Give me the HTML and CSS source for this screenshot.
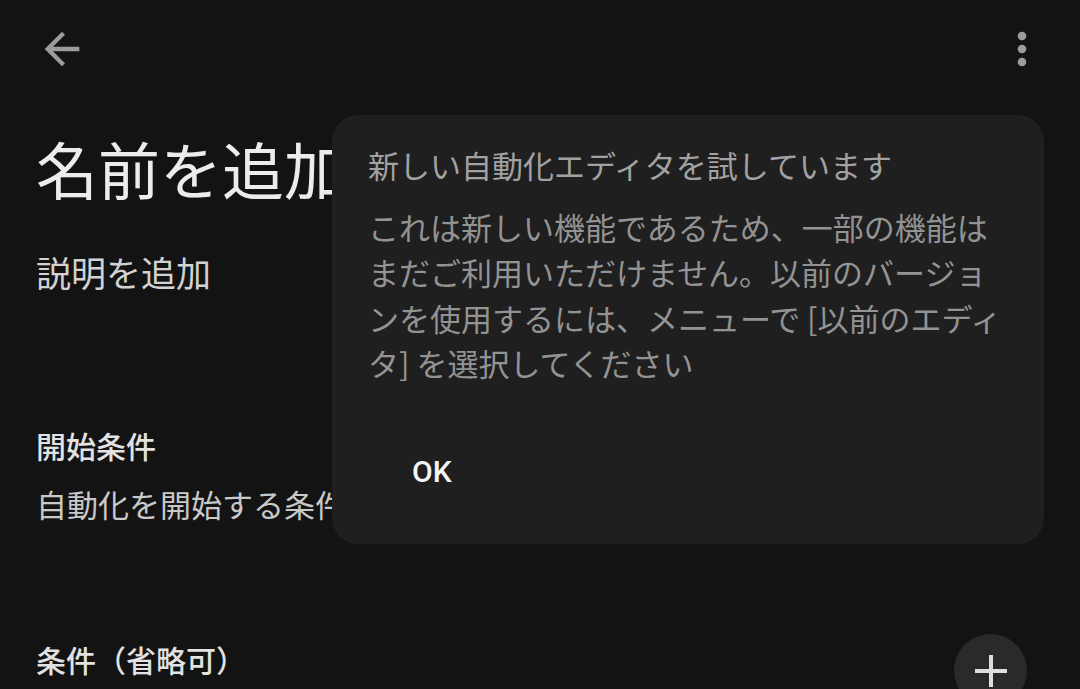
FILE: index.html
```html
<!DOCTYPE html>
<html lang="ja">
<head>
  <meta charset="UTF-8" />
  <title>オートメーションの編集</title>
  <link rel="stylesheet" href="styles.css">
</head>
<body>
  <div class="screen">
    <div class="topbar">
      <button class="icon-btn" aria-label="戻る">
        <svg viewBox="0 0 24 24" width="52" height="52"><path d="M20 11H7.83l5.59-5.59L12 4l-8 8 8 8 1.41-1.41L7.83 13H20v-2z" fill="currentColor"/></svg>
      </button>
      <button class="icon-btn" aria-label="メニュー">
        <svg viewBox="0 0 24 24" width="52" height="52"><circle cx="12" cy="6" r="2" fill="currentColor"/><circle cx="12" cy="12" r="2" fill="currentColor"/><circle cx="12" cy="18" r="2" fill="currentColor"/></svg>
      </button>
    </div>

    <div class="content">
      <h1 class="name">名前を追加</h1>
      <div class="desc">説明を追加</div>

      <div class="section-title trigger-title">開始条件</div>
      <div class="section-sub">自動化を開始する条件</div>

      <div class="section-row">
        <div class="section-title">条件（省略可）</div>
        <button class="fab" aria-label="追加">
          <svg viewBox="0 0 32 32" width="32" height="32"><path d="M14 0h4v14h14v4H18v14h-4V18H0v-4h14z" fill="currentColor"/></svg>
        </button>
      </div>
    </div>

    <div class="dialog">
      <div class="dialog-title">新しい自動化エディタを試しています</div>
      <div class="dialog-body">
        これは新しい機能であるため、一部の機能は<br>
        まだご利用いただけません。以前のバージョ<br>
        ンを使用するには、メニューで [以前のエディ<br>
        タ] を選択してください
      </div>
      <div class="dialog-actions">
        <button class="text-btn">OK</button>
      </div>
    </div>
  </div>
</body>
</html>
```

FILE: styles.css
```css
* {
  box-sizing: border-box;
}

body {
  margin: 0;
  background-color: #131313;
  font-family: "Noto Sans CJK JP", "Noto Sans", sans-serif;
  color: #e6e6e6;
  overflow: hidden;
}

button {
  background: none;
  border: none;
  padding: 0;
  color: inherit;
  font: inherit;
  cursor: pointer;
}

.screen {
  position: relative;
  width: 1080px;
  height: 689px;
  overflow: hidden;
}

.topbar {
  height: 98px;
  display: flex;
  align-items: center;
  justify-content: space-between;
  padding: 0 32px 0 36px;
}

.icon-btn {
  display: flex;
  color: #9c9c9c;
}

.content {
  padding-left: 36px;
  padding-right: 53px;
}

.name {
  margin: 39px 0 0;
  font-size: 62px;
  line-height: 62px;
  font-weight: 400;
  color: #ececec;
  white-space: nowrap;
}

.desc {
  margin-top: 55px;
  font-size: 35px;
  line-height: 35px;
  color: #d2d2d2;
}

.section-title {
  font-size: 30px;
  line-height: 30px;
  font-weight: 500;
  color: #e2e2e2;
  white-space: nowrap;
}

.trigger-title {
  margin-top: 141px;
}

.section-sub {
  margin-top: 28px;
  font-size: 31px;
  line-height: 31px;
  color: #c9c9c9;
  white-space: nowrap;
}

.section-row {
  margin-top: 125px;
  display: flex;
  align-items: flex-start;
  justify-content: space-between;
}

.fab {
  margin-top: -10px;
  width: 73px;
  height: 73px;
  border-radius: 50%;
  background: #2a2a2a;
  color: #dedede;
  display: flex;
  align-items: center;
  justify-content: center;
}

/* popup over the editor */
.dialog {
  position: absolute;
  left: 332px;
  top: 115px;
  width: 712px;
  height: 429px;
  border-radius: 26px;
  background: #1f1f1f;
  padding: 34px 40px 0 36px;
}

.dialog-title {
  font-size: 31px;
  line-height: 31px;
  color: #a2a2a2;
  white-space: nowrap;
}

.dialog-body {
  margin-top: 24px;
  font-size: 31px;
  line-height: 45.3px;
  color: #939393;
  white-space: nowrap;
}

.dialog-actions {
  margin-top: 64px;
  display: flex;
}

.text-btn {
  padding: 8px 0 8px 44px;
  font-family: Roboto, "Noto Sans", sans-serif;
  font-size: 30px;
  line-height: 30px;
  font-weight: 500;
  color: #f4f4f4;
}
```
